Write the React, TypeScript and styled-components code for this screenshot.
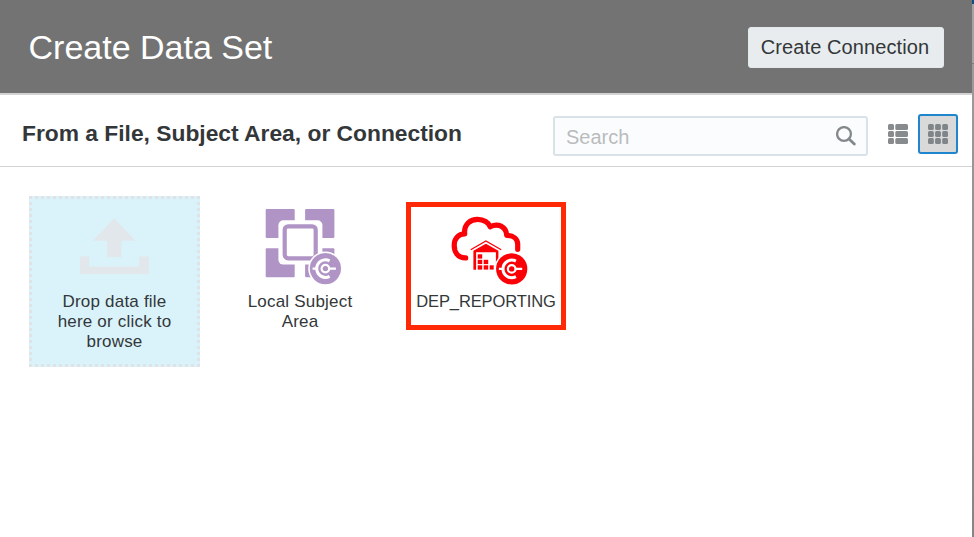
import React from "react";
import styled, { createGlobalStyle } from "styled-components";

const GlobalStyle = createGlobalStyle`
  * { box-sizing: border-box; }
  html, body { margin: 0; padding: 0; overflow: hidden; }
  body {
    font-family: "Liberation Sans", Arial, sans-serif;
    color: #333739;
    background: #fff;
  }
  button, input { font-family: inherit; }
`;

const Page = styled.div`
  display: flex;
  width: 974px;
  height: 537px;
`;

const Dialog = styled.main`
  display: flex;
  flex-direction: column;
  width: 972px;
  background: #fff;
`;

const Backdrop = styled.div`
  flex: 1;
  background: linear-gradient(
    #0b4f83 0 4px, #a3a3a3 4px 63px, #7c7c7c 63px 64px, #9b9b9b 64px, #858585 100%
  );
`;

const Header = styled.header`
  display: flex;
  align-items: center;
  justify-content: space-between;
  height: 95px;
  padding: 0 28.5px 0 28.5px;
  background: #737373;
  border-bottom: 2px solid #d2d2d2;
`;

const Title = styled.h1`
  margin: 0;
  font-size: 34px;
  font-weight: 400;
  line-height: 40px;
  color: #fff;
`;

const PrimaryButton = styled.button`
  width: 196px;
  height: 41px;
  margin-top: 2px;
  padding: 0 1px 0 0;
  border: 1px solid #e4e9ec;
  border-radius: 3px;
  background: #e8ecef;
  color: #333739;
  font-size: 20px;
  letter-spacing: 0.1px;
`;

const Toolbar = styled.div`
  display: flex;
  align-items: center;
  height: 72px;
  padding: 0 14px 0 22px;
  border-bottom: 1px solid #d2d2d2;
`;

const Heading = styled.h2`
  flex: 1;
  margin: 0;
  padding-top: 5px;
  font-size: 22.8px;
  font-weight: 700;
  line-height: 28px;
  white-space: nowrap;
`;

const SearchBox = styled.label`
  display: flex;
  align-items: center;
  width: 315px;
  height: 40px;
  margin: 10px 10px 0 0;
  padding: 0 10px 0 11px;
  border: 2px solid #d9e2e9;
  border-radius: 3px;
  background: #fbfcfe;
`;

const SearchInput = styled.input`
  flex: 1;
  min-width: 0;
  padding: 3px 0 0;
  border: 0;
  outline: 0;
  background: transparent;
  font-size: 20px;
  &::placeholder { color: #b9bcbd; opacity: 1; }
`;

const ViewButton = styled.button<{ $active?: boolean }>`
  display: grid;
  place-items: center;
  width: 40px;
  height: 40px;
  margin-top: 6px;
  padding: 0;
  border: ${(p) => (p.$active ? "2px solid #1f86ce" : "2px solid transparent")};
  border-radius: 3px;
  background: ${(p) => (p.$active ? "#d9d9d9" : "transparent")};
`;

const Tiles = styled.section`
  display: flex;
  align-items: flex-start;
  padding: 29px 28px;
`;

const DropTile = styled.div`
  width: 171px;
  height: 171px;
  margin-left: 1px;
  padding-top: 20px;
  border: 3px dotted #dfe3e8;
  background: #daf3fb;
  text-align: center;
`;

const Tile = styled.div<{ $highlight?: boolean }>`
  width: 160px;
  height: 128px;
  margin: ${(p) => (p.$highlight ? "6px 0 0 26px" : "6px 0 0 20px")};
  padding-top: 1px;
  border: 5px solid ${(p) => (p.$highlight ? "#ff2a05" : "transparent")};
  text-align: center;
`;

const Icon = styled.svg`
  display: block;
  margin: 0 auto;
  overflow: visible;
`;

const Label = styled.div<{ $compact?: boolean }>`
  margin: ${(p) => (p.$compact ? "-1px" : "0")} -4px 0;
  font-size: ${(p) => (p.$compact ? "16.5px" : "17px")};
  line-height: 20px;
  letter-spacing: ${(p) => (p.$compact ? "-0.1px" : "0.2px")};
  white-space: pre-line;
`;

const ConnectionBadge = ({ x, y, color }: { x: number; y: number; color: string }) => (
  <g transform={`translate(${x} ${y})`}>
    <circle r="17.2" fill="#fff" />
    <circle r="15.6" fill={color} />
    <g fill="none" stroke="#fff">
      <path d="M4.2-7.8A8.8 8.8 0 1 0 4.2 7.8" strokeWidth="3" />
      <path d="M-12.8 0h5M4 0h6.5" strokeWidth="2.4" />
      <circle r="3.8" strokeWidth="2.2" />
    </g>
  </g>
);

const ListIcon = () => (
  <svg width="20" height="20" fill="#878b8d">
    {[0, 7, 14].map((y) => (
      <g key={y}>
        <rect x="0" y={y} width="6" height="6" rx="1.5" />
        <rect x="7.3" y={y} width="12.7" height="6" rx="1.5" />
      </g>
    ))}
  </svg>
);

const GridIcon = () => (
  <svg width="20" height="20" fill="#7f8588">
    {[0, 7, 14].map((y) =>
      [0, 7.1, 14.2].map((x) => (
        <rect key={`${x}-${y}`} x={x} y={y} width="5.8" height="6" rx="1.5" />
      ))
    )}
  </svg>
);

export default function App() {
  return (
    <>
      <GlobalStyle />
      <Page>
        <Dialog>
          <Header>
            <Title>Create Data Set</Title>
            <PrimaryButton>Create Connection</PrimaryButton>
          </Header>
          <Toolbar>
            <Heading>From a File, Subject Area, or Connection</Heading>
            <SearchBox>
              <SearchInput placeholder="Search" />
              <svg width="20" height="20" fill="none" stroke="#83888a">
                <circle cx="8" cy="8" r="6.9" strokeWidth="2.3" />
                <path d="M13 13l5.3 5" strokeWidth="2.8" strokeLinecap="round" />
              </svg>
            </SearchBox>
            <ViewButton aria-label="List view"><ListIcon /></ViewButton>
            <ViewButton $active aria-label="Grid view"><GridIcon /></ViewButton>
          </Toolbar>
          <Tiles>
            <DropTile>
              <Icon width="70" height="73" viewBox="0.7 0.7 70 73" fill="#e2e7eb">
                <path d="M34.9 0l21.3 22.5h-14V39H27.6V22.5H13.6z" />
                <path d="M.6 38.3h9.3v10h50v-10h9.7V56H.6z" />
              </Icon>
              <Label>{"Drop data file\nhere or click to\nbrowse"}</Label>
            </DropTile>
            <Tile>
              <Icon width="70" height="84" viewBox="265.3 207.7 70 84">
                <g fill="#b094c6">
                  <rect x="266" y="208.7" width="29" height="29" rx="1" />
                  <rect x="305.4" y="208.7" width="29.3" height="29" rx="1" />
                  <rect x="266" y="248" width="29" height="29" rx="1" />
                  <rect x="305.4" y="248" width="29.3" height="29" rx="1" />
                </g>
                <rect x="278.7" y="219.9" width="44" height="44.4" rx="5" fill="#fff" />
                <rect x="285" y="226" width="31" height="32" rx="3.5" fill="#fff" stroke="#b094c6" strokeWidth="4.2" />
                <ConnectionBadge x={325.7} y={268.3} color="#b094c6" />
              </Icon>
              <Label>{"Local Subject\nArea"}</Label>
            </Tile>
            <Tile $highlight>
              <Icon width="70" height="84" viewBox="451.3 207.7 70 84">
                <path
                  d="M466 257.6C457.5 257.6 454.5 251 454.5 245C454.5 238 459 233.5 465 233.5C464 223.5 471 219 478 219C484 219 489 222.5 490.500 226.5C498 222.5 506.5 226 507 235C514 235 518 239 518 244V249"
                  fill="none" stroke="#fb0007" strokeWidth="5.2" strokeLinejoin="round" strokeLinecap="round"
                />
                <path d="M471 249.5L486.2 240.6L501.5 249.5" fill="none" stroke="#fb0007" strokeWidth="1.3" />
                <path d="M473.7 250.5L486.2 243.500L498.7 250.5V270H496.2V252H476.4V269.5H473.7z" fill="#fb0007" />
                <g fill="#fb0007">
                  <rect x="478" y="254" width="4.5" height="4.3" />
                  <rect x="478" y="259.5" width="4.5" height="4.3" />
                  <rect x="478" y="265" width="4.5" height="4.3" />
                  <rect x="484" y="259.5" width="4.5" height="4.3" />
                  <rect x="484" y="265" width="4.5" height="4.3" />
                  <rect x="490" y="265" width="4" height="4.3" />
                </g>
                <ConnectionBadge x={512} y={268.6} color="#fb0007" />
              </Icon>
              <Label $compact>DEP_REPORTING</Label>
            </Tile>
          </Tiles>
        </Dialog>
        <Backdrop />
      </Page>
    </>
  );
}
